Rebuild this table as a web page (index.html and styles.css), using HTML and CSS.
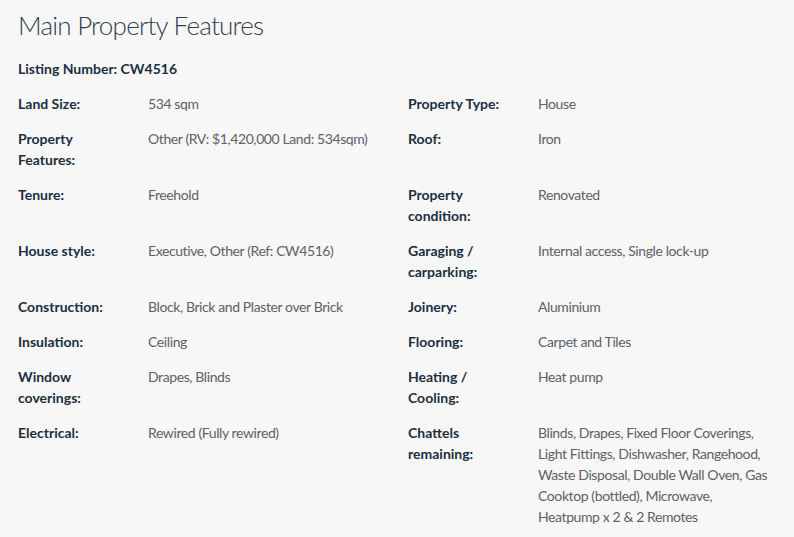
FILE: index.html
```html
<!DOCTYPE html>
<html lang="en">
<head>
<meta charset="utf-8">
<title>Main Property Features</title>
<link rel="stylesheet" href="styles.css">
</head>
<body>
<div class="page">
  <h1 class="title">Main Property Features</h1>
  <p class="listing">Listing Number: CW4516</p>
  <div class="features">
    <div class="label">Land Size:</div><div class="value">534 sqm</div>
    <div class="label">Property Type:</div><div class="value">House</div>

    <div class="label">Property Features:</div><div class="value">Other (RV: $1,420,000 Land: 534sqm)</div>
    <div class="label">Roof:</div><div class="value">Iron</div>

    <div class="label">Tenure:</div><div class="value">Freehold</div>
    <div class="label">Property condition:</div><div class="value">Renovated</div>

    <div class="label">House style:</div><div class="value">Executive, Other (Ref: CW4516)</div>
    <div class="label">Garaging / carparking:</div><div class="value">Internal access, Single lock-up</div>

    <div class="label">Construction:</div><div class="value">Block, Brick and Plaster over Brick</div>
    <div class="label">Joinery:</div><div class="value">Aluminium</div>

    <div class="label">Insulation:</div><div class="value">Ceiling</div>
    <div class="label">Flooring:</div><div class="value">Carpet and Tiles</div>

    <div class="label">Window coverings:</div><div class="value">Drapes, Blinds</div>
    <div class="label">Heating / Cooling:</div><div class="value">Heat pump</div>

    <div class="label">Electrical:</div><div class="value">Rewired (Fully rewired)</div>
    <div class="label">Chattels remaining:</div><div class="value">Blinds, Drapes, Fixed Floor Coverings, Light Fittings, Dishwasher, Rangehood, Waste Disposal, Double Wall Oven, Gas Cooktop (bottled), Microwave, Heatpump x 2 &amp; 2 Remotes</div>
  </div>
</div>
</body>
</html>
```
FILE: styles.css
```css
html, body {
  margin: 0;
  padding: 0;
  background: #f7f7f7;
}
body {
  font-family: "Lato", "Open Sans", sans-serif;
  font-size: 14px;
  line-height: 21px;
  color: #555a5f;
}
.page {
  padding: 10px 18px 0 18px;
}
.title {
  margin: 0 0 17px 0;
  font-size: 26px;
  line-height: 31px;
  font-weight: 300;
  letter-spacing: -0.75px;
  color: #2f3f4c;
}
.listing {
  margin: 0 0 14px 0;
  font-weight: 700;
  color: #1b2f40;
}
.features {
  display: grid;
  grid-template-columns: 130px 260px 130px 234px;
  row-gap: 14px;
}
.label {
  font-weight: 700;
  color: #1b2f40;
  padding-right: 22px;
}
.value {
  color: #5d6166;
  letter-spacing: -0.4px;
}
```
